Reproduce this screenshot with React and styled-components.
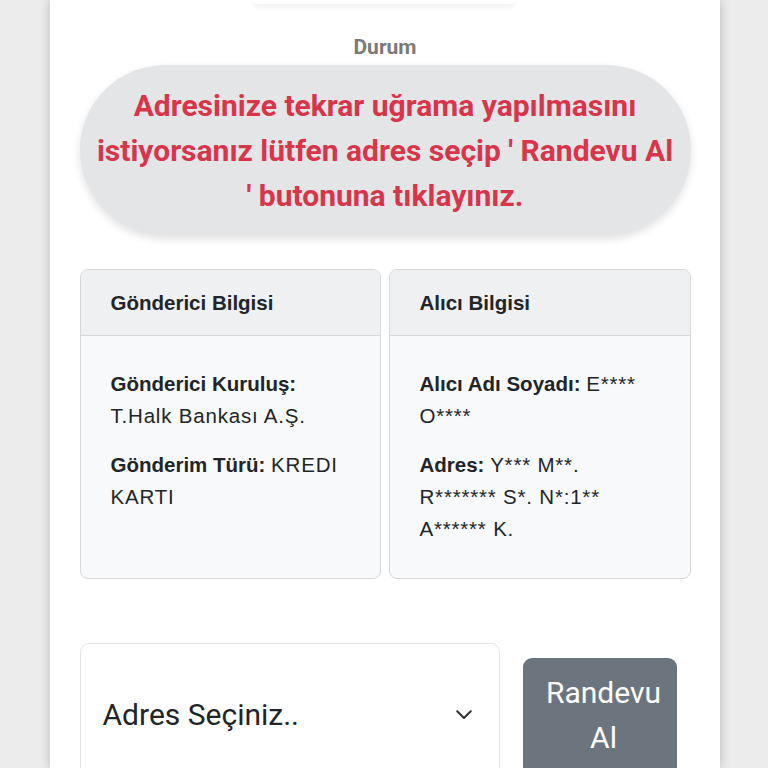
import React from 'react';
import styled, { createGlobalStyle } from 'styled-components';

const GlobalStyle = createGlobalStyle`
  html, body {
    margin: 0;
    padding: 0;
    height: 768px;
    overflow: hidden;
    background: #ececec;
  }
  * { box-sizing: border-box; }
`;

const Page = styled.div`
  display: flex;
  justify-content: center;
  height: 768px;
  padding-left: 50px;
  padding-right: 49px;
`;

const Panel = styled.main`
  flex: 1;
  background: #fff;
  box-shadow: 0 0 10px rgba(0, 0, 0, 0.22);
  padding: 0 29px 0 30px;
  display: flex;
  flex-direction: column;
  align-items: stretch;
  font-family: Roboto, "Noto Sans", sans-serif;
  & > * { flex-shrink: 0; }
`;

const TopStub = styled.div`
  align-self: center;
  width: 262px;
  height: 4px;
  margin-left: -2px;
  background: #fff;
  border-radius: 0 0 12px 12px;
  box-shadow: 0 2px 6px rgba(0, 0, 0, 0.1);
`;

const StatusLabel = styled.div`
  text-align: center;
  color: #7a7a7a;
  font-weight: 700;
  font-size: 21px;
  line-height: 24px;
  margin-top: 31px;
`;

const StatusPill = styled.div`
  margin-top: 6px;
  height: 170px;
  border-radius: 85px;
  background: #e4e5e7;
  box-shadow: 0 4px 8px rgba(0, 0, 0, 0.12);
  display: flex;
  align-items: center;
  justify-content: center;
  text-align: center;
  color: #d8344a;
  font-weight: 700;
  font-size: 30px;
  line-height: 45px;
`;

const StatusText = styled.span`
  max-width: 582px;
`;

const CardRow = styled.div`
  display: grid;
  grid-template-columns: 301px 302px;
  column-gap: 8px;
  margin-top: 34px;
`;

const Card = styled.section`
  height: 310px;
  border: 1px solid #d5d7da;
  border-radius: 8px;
  background: #f8f9fa;
  overflow: hidden;
  font-family: "Liberation Sans", Arial, sans-serif;
  color: #212529;
`;

const CardHeader = styled.header`
  height: 66px;
  background: #eff0f2;
  border-bottom: 1px solid #d5d7da;
  padding: 0 30px;
  display: flex;
  align-items: center;
  font-weight: 700;
  font-size: 20.5px;
`;

const CardBody = styled.div`
  padding: 32px 30px 0;
  font-size: 20.5px;
  line-height: 32px;
`;

const Field = styled.p`
  margin: 0 0 17px;
  b { font-weight: 700; }
`;

const Value = styled.span`
  letter-spacing: 0.8px;
`;

const ActionRow = styled.div`
  display: flex;
  align-items: flex-start;
  margin-top: 64px;
  gap: 23px;
`;

const SelectBox = styled.div`
  width: 420px;
  height: 150px;
  border: 1px solid #e3e4e6;
  border-radius: 9px;
  display: flex;
  align-items: center;
  justify-content: space-between;
  padding: 0 26px 0 22px;
  font-size: 30px;
  color: #212529;
`;

const SelectText = styled.span`
  margin-top: -8px;
`;

const Chevron = styled.svg`
  width: 18px;
  height: 18px;
  margin-top: -8px;
`;

const Button = styled.button`
  width: 154px;
  height: 140px;
  margin-top: 15px;
  border: none;
  border-radius: 9px;
  background: #6c757d;
  color: #fff;
  font-family: Roboto, "Noto Sans", sans-serif;
  font-size: 30px;
  line-height: 45px;
  padding: 12px 6px 0 14px;
  display: flex;
  flex-direction: column;
  align-items: center;
  justify-content: flex-start;
`;

export default function App() {
  return (
    <>
      <GlobalStyle />
      <Page>
        <Panel>
          <TopStub />
          <StatusLabel>Durum</StatusLabel>
          <StatusPill>
            <StatusText>
              Adresinize tekrar uğrama yapılmasını istiyorsanız lütfen adres seçip ' Randevu Al ' butonuna tıklayınız.
            </StatusText>
          </StatusPill>
          <CardRow>
            <Card>
              <CardHeader>Gönderici Bilgisi</CardHeader>
              <CardBody>
                <Field><b>Gönderici Kuruluş:</b> <Value>T.Halk Bankası A.Ş.</Value></Field>
                <Field><b>Gönderim Türü:</b> <Value>KREDI KARTI</Value></Field>
              </CardBody>
            </Card>
            <Card>
              <CardHeader>Alıcı Bilgisi</CardHeader>
              <CardBody>
                <Field><b>Alıcı Adı Soyadı:</b> <Value>E**** O****</Value></Field>
                <Field><b>Adres:</b> <Value>Y*** M**. R******* S*. N*:1** A****** K.</Value></Field>
              </CardBody>
            </Card>
          </CardRow>
          <ActionRow>
            <SelectBox>
              <SelectText>Adres Seçiniz..</SelectText>
              <Chevron viewBox="0 0 16 16" fill="none" stroke="#333" strokeWidth="1.8" strokeLinecap="round" strokeLinejoin="round">
                <path d="M2 5.5l6 6 6-6" />
              </Chevron>
            </SelectBox>
            <Button>
              <span>Randevu</span>
              <span>Al</span>
            </Button>
          </ActionRow>
        </Panel>
      </Page>
    </>
  );
}
